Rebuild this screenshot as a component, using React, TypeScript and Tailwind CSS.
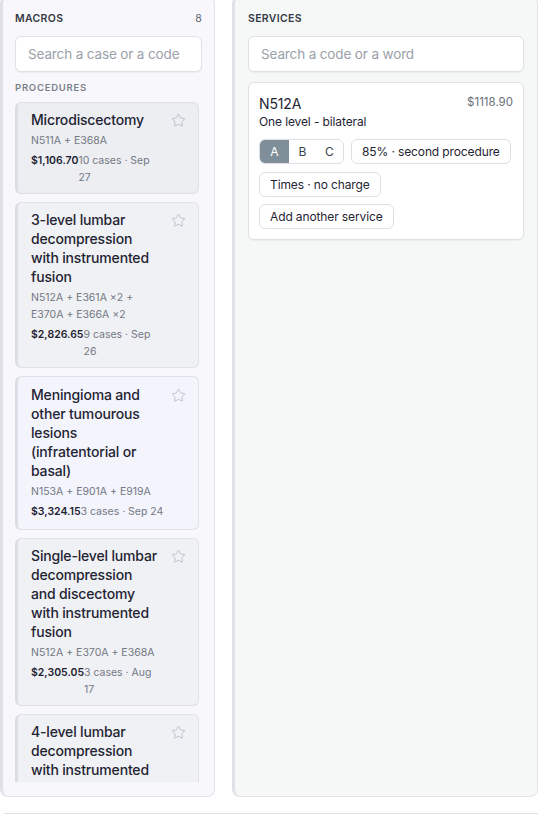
import { Star } from 'lucide-react'

type Macro = {
  title: string
  codes: string
  price: string
  meta: string
  tone: string
  active?: boolean
}

// meta keeps its line break where the date wraps under the count
const MACROS: Macro[] = [
  { title: 'Microdiscectomy', codes: 'N511A + E368A', price: '$1,106.70', meta: '10 cases · Sep\n27', tone: 'bg-[#eceef2]' },
  { title: '3-level lumbar decompression with instrumented fusion', codes: 'N512A + E361A ×2 + E370A + E366A ×2', price: '$2,826.65', meta: '9 cases · Sep\n26', tone: 'bg-[#f0f1f4]' },
  { title: 'Meningioma and other tumourous lesions (infratentorial or basal)', codes: 'N153A + E901A + E919A', price: '$3,324.15', meta: '3 cases · Sep 24', tone: 'bg-[#f4f4fc]', active: true },
  { title: 'Single-level lumbar decompression and discectomy with instrumented fusion', codes: 'N512A + E370A + E368A', price: '$2,305.05', meta: '3 cases · Aug\n17', tone: 'bg-[#f0f1f4]' },
  { title: '4-level lumbar decompression with instrumented fusion', codes: 'N512A + E361A ×3 + E370A', price: '$3,410.20', meta: '2 cases · Aug\n9', tone: 'bg-[#f0f1f4]' },
]

function MacroCard({ m }: { m: Macro }) {
  return (
    <div className={`flex shrink-0 items-start justify-between rounded-md border border-[#dfe1e6] border-l-[3px] border-l-[#dcdee4] ${m.tone} pl-[13px] pr-3 ${m.active ? 'pt-[8px] pb-[9px]' : 'pt-[7px] pb-[7px]'}`}>
      <div className="w-[127px]">
        <div className="text-[14px] leading-[19px] font-medium tracking-[-0.012em] text-[#1f2433]">{m.title}</div>
        <div className="mt-[3px] text-[10.5px] leading-[17px] text-[#737884]">{m.codes}</div>
        <div className="mt-[3px] flex text-[10.5px] leading-[17px]">
          <span className="shrink-0 font-semibold text-[#1f2433]">{m.price}</span>
          <span className="text-[#737884] whitespace-pre">{m.meta}</span>
        </div>
      </div>
      <Star size={15} strokeWidth={1.1} className="mt-[3px] shrink-0 text-[#a9aeb8]" />
    </div>
  )
}

function SearchBox({ placeholder }: { placeholder: string }) {
  return (
    <div className="h-9 rounded-md border border-[#dfe1e6] bg-white px-[12px] flex items-center shadow-[0_1px_1px_rgba(0,0,0,0.05)]">
      <span className="whitespace-nowrap text-[13.5px] tracking-[-0.01em] text-[#9a9fa9]">{placeholder}</span>
    </div>
  )
}

function Chip({ label }: { label: string }) {
  return (
    <span className="h-[25px] px-[10px] flex items-center whitespace-nowrap rounded-md border border-[#dcdfe4] text-[12px] tracking-[-0.01em] text-[#1f2433]">{label}</span>
  )
}

export default function App() {
  return (
    <div className="h-[815px] w-[538px] overflow-hidden bg-white" style={{ fontFamily: 'Inter, "Noto Sans", sans-serif' }}>
      <div className="flex gap-[17px] -mt-1 h-[801px]">
        {/* Macros column */}
        <div className="w-[215px] shrink-0 flex flex-col rounded-lg border border-[#e2e3ea] border-l-[3px] border-l-[#dfe1e6] bg-[#f8f8fc] pl-3 pr-3 pb-[14px] pt-[14px]">
          <div className="flex items-center justify-between text-[10.5px] leading-4 font-semibold tracking-[0.03em] text-[#353a45]">
            <span>MACROS</span>
            <span className="font-normal text-[#5d626d]">8</span>
          </div>
          <div className="mt-[9px]">
            <SearchBox placeholder="Search a case or a code" />
          </div>
          <div className="mt-[9px] text-[9.5px] leading-[14px] font-semibold tracking-[0.08em] text-[#7a7f8a]">PROCEDURES</div>
          <div className="mt-[7px] flex-1 min-h-0 overflow-hidden flex flex-col gap-2 pr-[3px]">
            {MACROS.map((m, i) => <MacroCard key={i} m={m} />)}
          </div>
        </div>

        {/* Services column */}
        <div className="w-[306px] shrink-0 rounded-lg border border-[#e2e3ea] border-l-[3px] border-l-[#dfe1e6] bg-[#f6f8f8] pl-[13px] pr-[13px] pt-[14px]">
          <div className="text-[10.5px] leading-4 font-semibold tracking-[0.03em] text-[#353a45]">SERVICES</div>
          <div className="mt-[9px]">
            <SearchBox placeholder="Search a code or a word" />
          </div>
          <div className="mt-[10px] rounded-md border border-[#dfe1e6] bg-white px-[10px] pt-[10px] pb-[10px] shadow-[0_1px_1px_rgba(0,0,0,0.04)]">
            <div className="flex items-center justify-between h-5">
              <span className="text-[14px] tracking-[-0.01em] text-[#1f2433]">N512A</span>
              <span className="text-[11.5px] text-[#6b707b]">$1118.90</span>
            </div>
            <div className="text-[12px] leading-[18px] tracking-[-0.01em] text-[#1f2433]">One level - bilateral</div>
            <div className="mt-2 flex gap-[7px]">
              <div className="flex h-[25px] rounded-md border border-[#dcdfe4] overflow-hidden text-[12px]">
                <span className="w-[29px] flex items-center justify-center bg-[#7f8f99] text-white">A</span>
                <span className="w-[27px] flex items-center justify-center text-[#3a3f4a]">B</span>
                <span className="w-[27px] flex items-center justify-center text-[#3a3f4a]">C</span>
              </div>
              <Chip label="85% · second procedure" />
            </div>
            <div className="mt-2 flex">
              <Chip label="Times · no charge" />
            </div>
            <div className="mt-[7px] flex">
              <Chip label="Add another service" />
            </div>
          </div>
        </div>
      </div>
      <div className="mt-4 ml-1 border-t border-[#e0e1e7]" />
    </div>
  )
}
